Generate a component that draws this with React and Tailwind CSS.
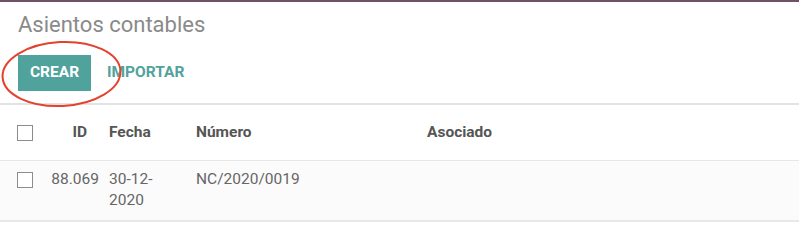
import React from 'react';

const rows = [{ id: '88.069', fecha: ['30-12-', '2020'], numero: 'NC/2020/0019', asociado: '' }];

function Checkbox() {
  return <span className="block w-[16px] h-[16px] border-[1.5px] border-[#8c8c8c] bg-white" />;
}

export default function App() {
  return (
    <div className="w-[799px] h-[229px] bg-white overflow-hidden font-['Roboto',sans-serif]">
      <div className="h-[2px] bg-[#6e5368]" />
      {/* control panel */}
      <div className="relative pl-[18px] pt-[10px] pb-[12px]">
        <h1 className="text-[22px] leading-[26px] text-[#8a8a8a]">Asientos contables</h1>
        <div className="flex items-center mt-[17px]">
          <button className="w-[73px] h-[36px] bg-[#50a29c] text-white text-[15.5px] font-bold">
            CREAR
          </button>
          <button className="ml-[16px] h-[36px] text-[#52a29c] text-[15.5px] font-bold">
            IMPORTAR
          </button>
        </div>
        {/* red annotation ring */}
        <svg className="absolute left-0 top-[36px] pointer-events-none" width="126" height="74" viewBox="0 0 126 74">
          <ellipse cx="61.5" cy="36" rx="59" ry="32" fill="none" stroke="#e2432f" strokeWidth="2" transform="rotate(-3 61.5 36)" />
        </svg>
      </div>

      {/* list */}
      <div className="border-t-2 border-[#e3e3e3] text-[15.5px]">
        <div className="flex items-center h-[56px] font-bold text-[#555555] border-b border-[#e6e6e6]">
          <div className="w-[45px] pl-[17px]"><Checkbox /></div>
          <div className="w-[58px] text-right pr-[16px]">ID</div>
          <div className="w-[87px] pl-[6px]">Fecha</div>
          <div className="w-[231px] pl-[6px]">Número</div>
          <div className="pl-[6px]">Asociado</div>
        </div>
        {rows.map(r => (
          <div key={r.id} className="flex items-start bg-[#fbfbfb] pt-[8px] pb-[9px] leading-[21px] text-[#666666] border-b-2 border-[#e8e8e8]">
            <div className="w-[45px] pl-[17px] pt-[3px]"><Checkbox /></div>
            <div className="w-[58px] text-right pr-[4px]">{r.id}</div>
            <div className="w-[87px] pl-[6px]">
              <div className="w-[60px]">{r.fecha[0]}<wbr />{r.fecha[1]}</div>
            </div>
            <div className="w-[231px] pl-[6px]">{r.numero}</div>
            <div className="pl-[6px]">{r.asociado}</div>
          </div>
        ))}
      </div>
    </div>
  );
}
